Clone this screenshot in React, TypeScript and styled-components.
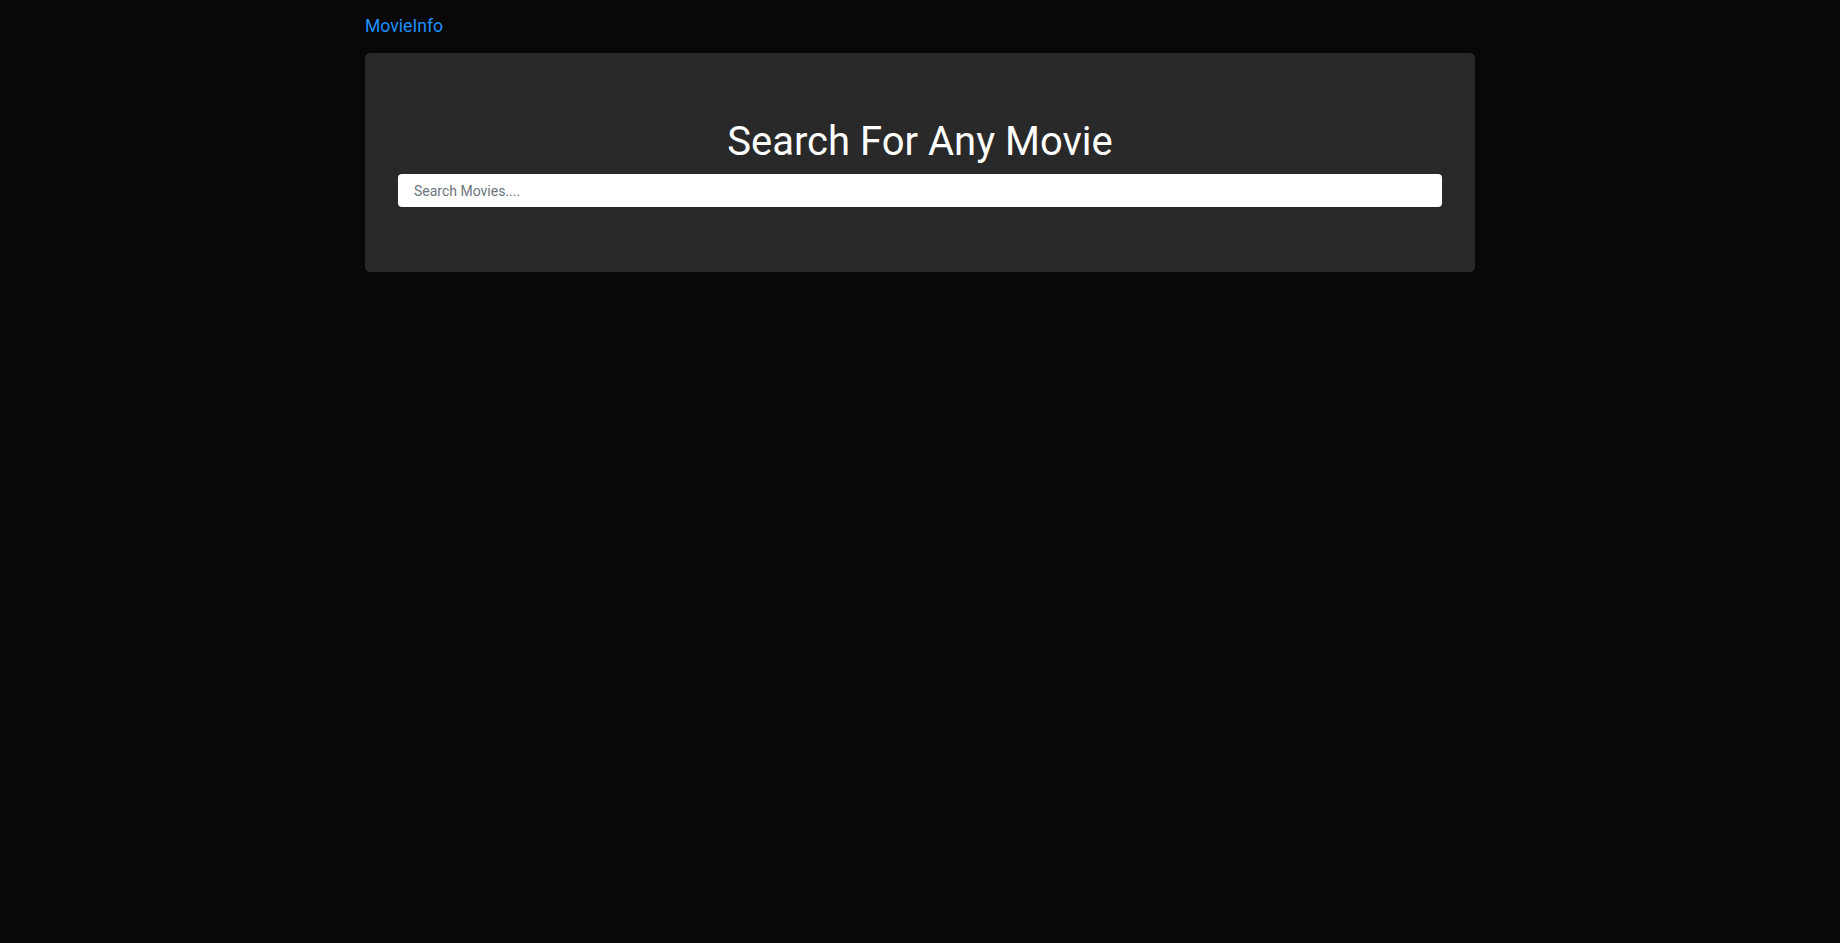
import React from "react";
import styled, { createGlobalStyle } from "styled-components";

const GlobalStyle = createGlobalStyle`
  html, body {
    margin: 0;
    padding: 0;
    background: #080808;
    font-family: Roboto, "Liberation Sans", Arial, sans-serif;
  }
  * { box-sizing: border-box; }
`;

const Page = styled.div`
  min-height: 943px;
  background: #080808;
`;

const Container = styled.div`
  width: 1110px;
  margin: 0 auto;
`;

const Nav = styled.nav`
  padding-top: 14px;
  margin-bottom: 15px;
  display: flex;
  align-items: center;
`;

const Brand = styled.a`
  font-size: 17.6px;
  line-height: 24px;
  color: #1e90ff;
  text-decoration: none;
  cursor: pointer;
`;

const Jumbotron = styled.section`
  background: #292929;
  border-radius: 5px;
  padding: 65px 33px;
  display: flex;
  flex-direction: column;
`;

const Title = styled.h1`
  margin: 0 0 8px;
  font-size: 40px;
  line-height: 48px;
  font-weight: 400;
  color: #ffffff;
  text-align: center;
`;

const SearchInput = styled.input`
  width: 100%;
  height: 33px;
  padding: 6px 16px;
  border: none;
  border-radius: 4px;
  background: #ffffff;
  font-family: Roboto, "Liberation Sans", Arial, sans-serif;
  font-size: 14px;
  line-height: 21px;
  color: #495057;
  outline: none;
  &::placeholder {
    color: #6c757d;
  }
`;

export default function App() {
  return (
    <Page>
      <GlobalStyle />
      <Container>
        <Nav>
          <Brand>MovieInfo</Brand>
        </Nav>
        <Jumbotron>
          <Title>Search For Any Movie</Title>
          <SearchInput type="text" placeholder="Search Movies...." />
        </Jumbotron>
      </Container>
    </Page>
  );
}
